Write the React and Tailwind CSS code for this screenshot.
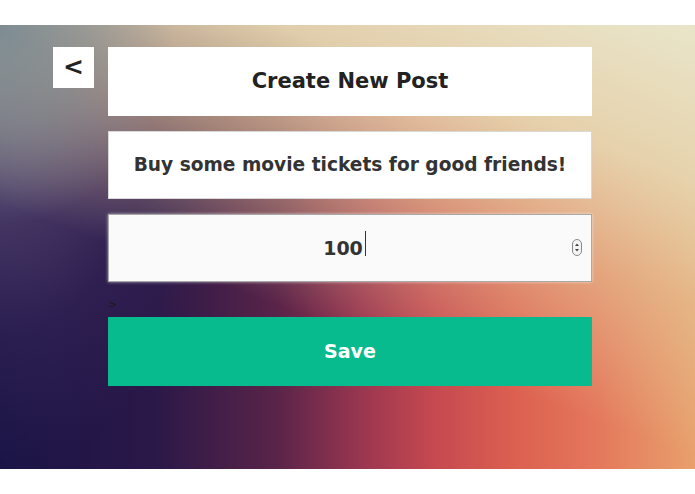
export default function App() {
  const font = { fontFamily: '"DejaVu Sans", "Noto Sans", sans-serif' };
  return (
    <div className="w-[695px] h-[494px] bg-white" style={font}>
      <div className="h-[25px]" />
      <div
        className="h-[444px] flex pl-[53px] pt-[22px] gap-[14px]"
        style={{
          background:
            "radial-gradient(ellipse 25% 45% at 0% 0%, rgba(122,139,147,0.95) 0%, rgba(122,139,147,0.55) 50%, rgba(122,139,147,0) 100%), linear-gradient(200deg, rgba(233,229,202,1) 0%, rgba(230,214,176,0.95) 22%, rgba(228,196,150,0.6) 40%, rgba(228,190,150,0) 62%), radial-gradient(ellipse 35% 100% at 0% 0%, rgba(112,108,136,0.9) 0%, rgba(84,66,110,0.78) 40%, rgba(58,40,90,0.5) 70%, rgba(40,28,80,0) 100%), linear-gradient(to right, #1a1446 0%, #2a1848 22%, #5a2449 40%, #9a3650 52%, #c44850 62%, #dc6050 74%, #e4785c 86%, #e8a06c 100%)",
        }}
      >
        <button className="w-[41px] h-[41px] bg-white flex items-center justify-center text-[25px] font-bold text-[#222] leading-none pb-[3px]">
          &lt;
        </button>
        <div className="w-[484px] flex flex-col">
          <div className="h-[69px] bg-white flex items-center justify-center text-[21px] font-bold text-[#222]">
            Create New Post
          </div>
          <div className="mt-[15px] h-[68px] bg-white border border-[#d8d8d8] flex items-center justify-center text-[18.6px] font-bold text-[#333]">
            Buy some movie tickets for good friends!
          </div>
          <div className="mt-[15px] h-[68px] bg-[#fafafa] border border-[#a8a8a8] shadow-[0_0_3px_rgba(255,255,255,0.6)] relative flex items-center justify-center pr-[14px] text-[19px] font-bold text-[#333]">
            <span className="relative">
              100
              <span className="absolute right-[-3px] top-[-3px] w-px h-[25px] bg-[#333]" />
            </span>
            <svg className="absolute right-[9px] top-[24px]" width="10" height="17" viewBox="0 0 10 17">
              <rect x="0.5" y="0.5" width="9" height="16" rx="4.5" fill="#f4f4f4" stroke="#888" />
              <path d="M3 7 L5 4.5 L7 7 Z" fill="#444" />
              <path d="M3 10 L5 12.5 L7 10 Z" fill="#444" />
            </svg>
          </div>
          <div className="h-[35px] text-[11px] text-[#1a1a1a] pt-[17px] leading-none">&gt;</div>
          <button className="h-[69px] bg-[#07bb8e] text-white text-[19px] font-bold flex items-center justify-center">
            Save
          </button>
        </div>
      </div>
    </div>
  );
}
